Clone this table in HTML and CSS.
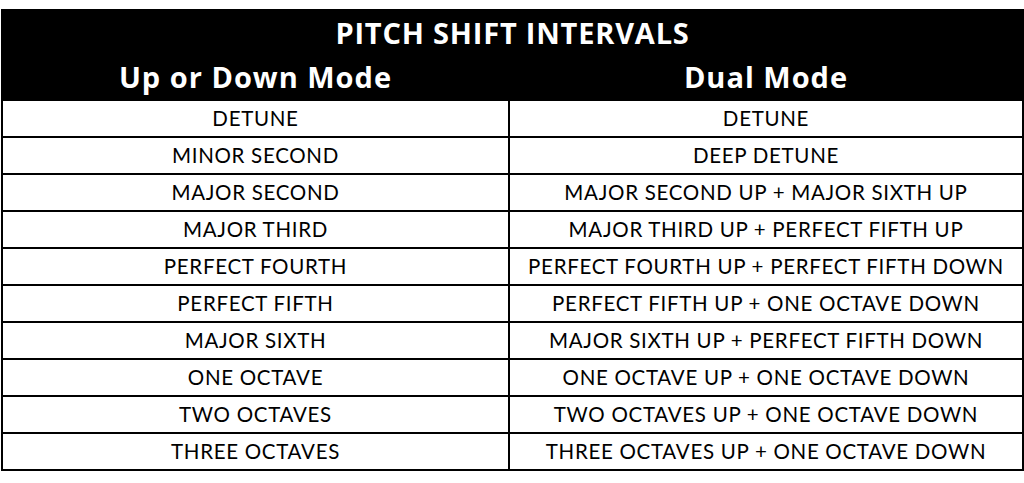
FILE: index.html
```html
<!DOCTYPE html>
<html>
<head>
<meta charset="utf-8">
<link rel="stylesheet" href="styles.css">
</head>
<body>
<div class="wrap">
<table class="intervals">
  <colgroup><col class="col-a"><col class="col-b"></colgroup>
  <thead>
    <tr class="title-row"><th colspan="2">PITCH SHIFT INTERVALS</th></tr>
    <tr class="sub-row"><th>Up or Down Mode</th><th>Dual Mode</th></tr>
  </thead>
  <tbody>
    <tr><td>DETUNE</td><td>DETUNE</td></tr>
    <tr><td>MINOR SECOND</td><td>DEEP DETUNE</td></tr>
    <tr><td>MAJOR SECOND</td><td>MAJOR SECOND UP + MAJOR SIXTH UP</td></tr>
    <tr><td>MAJOR THIRD</td><td>MAJOR THIRD UP + PERFECT FIFTH UP</td></tr>
    <tr><td>PERFECT FOURTH</td><td>PERFECT FOURTH UP + PERFECT FIFTH DOWN</td></tr>
    <tr><td>PERFECT FIFTH</td><td>PERFECT FIFTH UP + ONE OCTAVE DOWN</td></tr>
    <tr><td>MAJOR SIXTH</td><td>MAJOR SIXTH UP + PERFECT FIFTH DOWN</td></tr>
    <tr><td>ONE OCTAVE</td><td>ONE OCTAVE UP + ONE OCTAVE DOWN</td></tr>
    <tr><td>TWO OCTAVES</td><td>TWO OCTAVES UP + ONE OCTAVE DOWN</td></tr>
    <tr><td>THREE OCTAVES</td><td>THREE OCTAVES UP + ONE OCTAVE DOWN</td></tr>
  </tbody>
</table>
</div>
</body>
</html>
```
FILE: styles.css
```css
html, body {
  margin: 0;
  padding: 0;
  background: #fff;
}
.wrap {
  padding: 9px 2px 0 1px;
}
.intervals {
  width: 1021px;
  border-collapse: collapse;
  table-layout: fixed;
  font-family: Lato, "Open Sans", sans-serif;
  color: #000;
}
.col-a {
  width: 507px;
}
.col-b {
  width: 514px;
}
.intervals th {
  background: #000;
  color: #fff;
  font-family: "Open Sans", Lato, sans-serif;
  font-weight: 700;
  padding: 0;
  text-align: center;
}
.title-row th {
  height: 44px;
  padding-bottom: 2px;
  font-size: 29px;
  line-height: 44px;
  letter-spacing: 0.8px;
  border: 2px solid #000;
}
.sub-row th {
  height: 36px;
  padding-bottom: 4px;
  font-size: 29px;
  line-height: 36px;
  letter-spacing: 1px;
  border: 2px solid #000;
}
.intervals td {
  height: 35px;
  padding: 0;
  text-align: center;
  font-size: 20.5px;
  letter-spacing: 0.7px;
  line-height: 35px;
  border: 2px solid #000;
  white-space: nowrap;
}
```
